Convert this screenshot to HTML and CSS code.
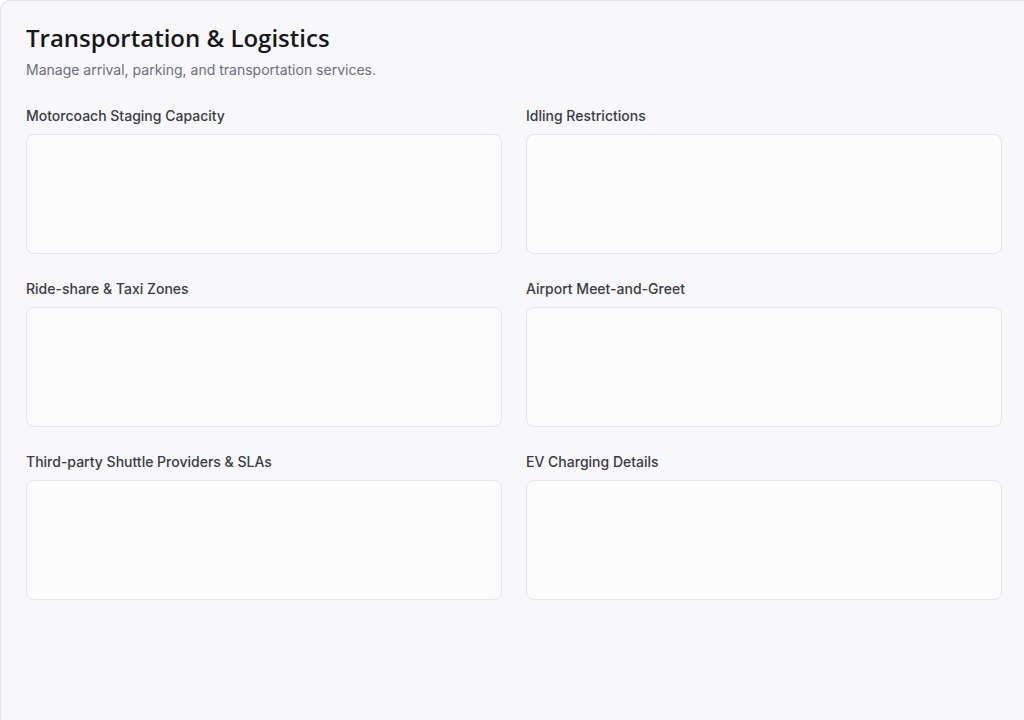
FILE: index.html
```html
<!DOCTYPE html>
<html lang="en">
<head>
<meta charset="utf-8">
<title>Transportation &amp; Logistics</title>
<link rel="stylesheet" href="styles.css">
</head>
<body>
<main class="panel">
  <header class="head">
    <h1 class="title">Transportation &amp; Logistics</h1>
    <p class="subtitle">Manage arrival, parking, and transportation services.</p>
  </header>
  <section class="grid">
    <div class="field">
      <label class="label">Motorcoach Staging Capacity</label>
      <textarea class="box"></textarea>
    </div>
    <div class="field">
      <label class="label">Idling Restrictions</label>
      <textarea class="box"></textarea>
    </div>
    <div class="field">
      <label class="label">Ride-share &amp; Taxi Zones</label>
      <textarea class="box"></textarea>
    </div>
    <div class="field">
      <label class="label">Airport Meet-and-Greet</label>
      <textarea class="box"></textarea>
    </div>
    <div class="field">
      <label class="label">Third-party Shuttle Providers &amp; SLAs</label>
      <textarea class="box"></textarea>
    </div>
    <div class="field">
      <label class="label">EV Charging Details</label>
      <textarea class="box"></textarea>
    </div>
  </section>
</main>
</body>
</html>
```

FILE: styles.css
```css
* { box-sizing: border-box; }
html, body { margin: 0; padding: 0; background: #ffffff; }
body { font-family: Inter, "Liberation Sans", sans-serif; }

.panel {
  width: 100%;
  min-height: 100vh;
  background: #f8f8fa;
  border-top: 1px solid #e3e3e8;
  border-left: 1px solid #e3e3e8;
  border-radius: 10px 0 0 0;
  padding: 21px 22px 40px 25px;
}

.head { margin-bottom: 26px; }
.title {
  margin: 0 0 6px;
  font-family: "Open Sans", "Noto Sans", sans-serif;
  font-size: 24px;
  line-height: 32px;
  font-weight: 600;
  color: #17171c;
}
.subtitle {
  margin: 0;
  font-size: 14px;
  line-height: 20px;
  color: #6e6e7e;
}

.grid {
  display: grid;
  grid-template-columns: 1fr 1fr;
  column-gap: 24px;
  row-gap: 25px;
}
.field { display: flex; flex-direction: column; }
.label {
  font-size: 14px;
  line-height: 20px;
  font-weight: 500;
  color: #3b3b45;
  margin-bottom: 8px;
}
.box {
  display: block;
  width: 100%;
  height: 120px;
  resize: none;
  background: #fcfcfd;
  border: 1px solid #e3e4ee;
  border-radius: 8px;
  padding: 8px 12px;
  font-family: inherit;
  font-size: 14px;
  outline: none;
}
```
